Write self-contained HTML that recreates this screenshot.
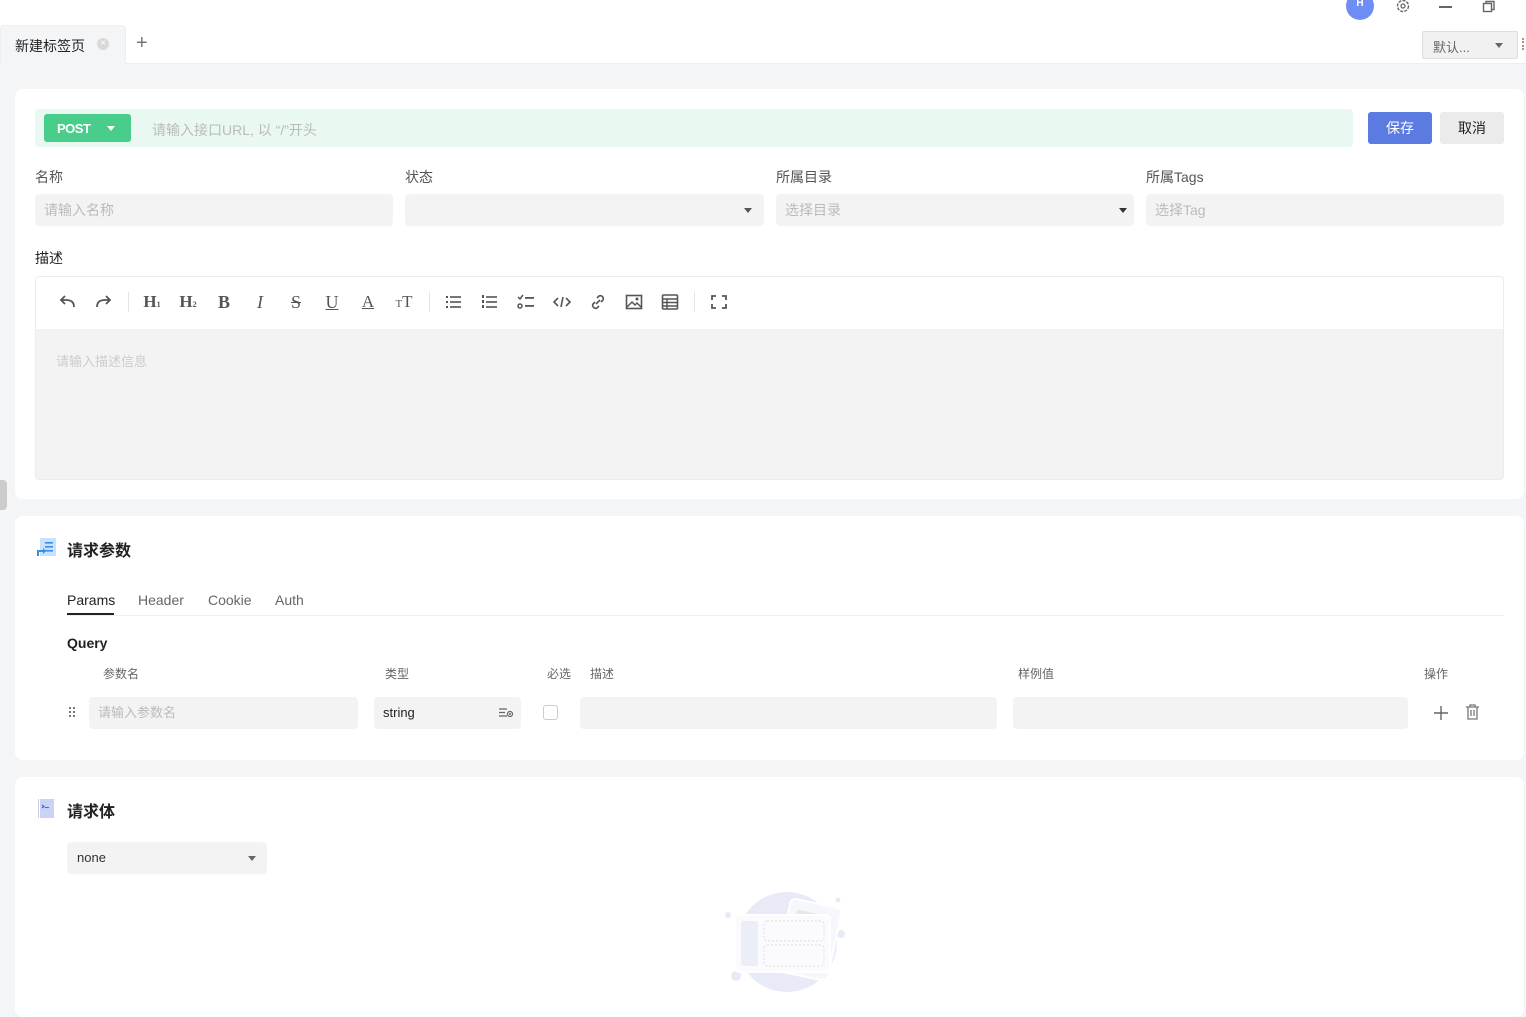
<!DOCTYPE html>
<html><head><meta charset="utf-8">
<style>
*{margin:0;padding:0;box-sizing:border-box}
body{width:1526px;height:1009px;overflow:hidden;background:#f4f5f7;font-family:"Liberation Sans","Noto Sans CJK SC",sans-serif;font-size:14px;color:#333;position:relative}
.a{position:absolute}
.card{position:absolute;left:15px;width:1509px;background:#fff;border-radius:8px}
.inp{position:absolute;background:#f3f3f3;border-radius:4px;height:32px;color:#bbb;font-size:14px;line-height:32px;padding-left:9px}
.lbl{position:absolute;font-size:14px;color:#555}
.tri{position:absolute;width:0;height:0;border-left:4px solid transparent;border-right:4px solid transparent;border-top:5px solid #555}
.tb{position:absolute;top:292px;width:20px;height:20px;color:#555;font-family:"Liberation Serif",serif;font-size:17px;text-align:center;line-height:20px}
.sep{position:absolute;top:292px;width:1px;height:20px;background:#e5e5e5}
.th{position:absolute;top:665px;font-size:12px;color:#666}
</style></head><body>
<!-- top bar -->
<div class="a" style="left:0;top:0;width:1526px;height:64px;background:#fff;border-bottom:1px solid #eceef2"></div>
<div class="a" style="left:0;top:25px;width:126px;height:40px;background:#f4f5f7;border:1px solid #eceef2;border-bottom:none;border-radius:4px 4px 0 0"></div>
<div class="a" style="left:15px;top:36px;font-size:14px;color:#222">新建标签页</div>
<div class="a" style="left:97px;top:38px;width:12px;height:12px;border-radius:50%;background:#d9d9d9;color:#fff;font-size:10px;line-height:12px;text-align:center">×</div>
<div class="a" style="left:136px;top:32px;font-size:20px;color:#777">+</div>
<div class="a" style="left:1346px;top:-8px;width:28px;height:28px;border-radius:50%;background:#6f8ef5;color:#fff;font-size:10px;font-weight:bold;text-align:center;line-height:28px"><span style="position:relative;top:-2px">H</span></div>
<svg class="a" style="left:1395px;top:0" width="16" height="14" viewBox="0 0 16 14"><circle cx="8" cy="6" r="5.5" fill="none" stroke="#666" stroke-width="1.4" stroke-dasharray="3 1.2"/><circle cx="8" cy="6" r="2" fill="none" stroke="#666" stroke-width="1.3"/></svg>
<div class="a" style="left:1439px;top:6px;width:13px;height:1.5px;background:#666"></div>
<svg class="a" style="left:1482px;top:0" width="14" height="14"><rect x="1.5" y="3.5" width="8" height="8" fill="none" stroke="#666" stroke-width="1.4"/><path d="M4 3.5V1.5h8v8h-2.5" fill="none" stroke="#666" stroke-width="1.4"/></svg>
<div class="a" style="left:1422px;top:31px;width:96px;height:28px;background:#f1f1f1;border:1px solid #ddd;border-radius:2px"></div>
<div class="a" style="left:1433px;top:37px;font-size:13px;color:#666">默认...</div>
<div class="tri" style="left:1495px;top:43px;border-top-color:#666"></div>
<div class="a" style="left:1522px;top:38px;width:2px;height:12px;border-left:2px dotted #b88"></div>
<div class="a" style="left:0;top:480px;width:7px;height:30px;background:#ccc;border-radius:0 4px 4px 0"></div>

<!-- card1 -->
<div class="card" style="top:89px;height:410px"></div>
<div class="a" style="left:35px;top:109px;width:1318px;height:38px;background:#e9f8f1;border-radius:4px"></div>
<div class="a" style="left:44px;top:114px;width:87px;height:28px;background:#48cd8b;border-radius:3px;color:#fff;font-weight:bold;font-size:13px;line-height:29px;padding-left:13px;letter-spacing:-0.5px">POST</div>
<div class="tri" style="left:107px;top:126px;border-top-color:#fff"></div>
<div class="a" style="left:152px;top:120px;color:#bbb;font-size:14px">请输入接口URL, 以 “/”开头</div>
<div class="a" style="left:1368px;top:112px;width:64px;height:32px;background:#5b7be0;border-radius:3px;color:#fff;text-align:center;line-height:32px">保存</div>
<div class="a" style="left:1440px;top:112px;width:64px;height:32px;background:#ebebeb;border-radius:3px;color:#222;text-align:center;line-height:32px">取消</div>

<div class="lbl" style="left:35px;top:167px">名称</div>
<div class="lbl" style="left:405px;top:167px">状态</div>
<div class="lbl" style="left:776px;top:167px">所属目录</div>
<div class="lbl" style="left:1146px;top:167px">所属Tags</div>
<div class="inp" style="left:35px;top:194px;width:358px">请输入名称</div>
<div class="inp" style="left:405px;top:194px;width:359px"></div>
<div class="tri" style="left:744px;top:208px"></div>
<div class="inp" style="left:776px;top:194px;width:358px">选择目录</div>
<div class="tri" style="left:1119px;top:208px;border-top-color:#333"></div>
<div class="inp" style="left:1146px;top:194px;width:358px">选择Tag</div>
<div class="lbl" style="left:35px;top:248px;color:#222">描述</div>

<div class="a" style="left:35px;top:276px;width:1469px;height:204px;border:1px solid #ebebf0;border-radius:4px;overflow:hidden">
  <div class="a" style="left:0;top:52px;width:1469px;height:152px;background:#f3f3f3"></div>
</div>
<div class="a" style="left:56px;top:351px;color:#ccc;font-size:13px">请输入描述信息</div>
<!-- toolbar -->
<svg class="a" style="left:58px;top:293px" width="20" height="18"><path d="M16 14c0-5-3-7-8-7H3M7 3L3 7l4 4" fill="none" stroke="#555" stroke-width="1.8"/></svg>
<svg class="a" style="left:94px;top:293px" width="20" height="18"><path d="M3 14c0-5 3-7 8-7h5M12 3l4 4-4 4" fill="none" stroke="#555" stroke-width="1.8"/></svg>
<div class="sep" style="left:128px"></div>
<div class="tb" style="left:142px;font-weight:bold">H<span style="font-size:8px">1</span></div>
<div class="tb" style="left:178px;font-weight:bold">H<span style="font-size:8px">2</span></div>
<div class="tb" style="left:214px;font-family:'Liberation Serif';font-weight:bold;font-size:18px">B</div>
<div class="tb" style="left:250px;font-style:italic;font-size:18px">I</div>
<div class="tb" style="left:286px;text-decoration:line-through;font-size:18px">S</div>
<div class="tb" style="left:322px;text-decoration:underline;font-size:18px">U</div>
<div class="tb" style="left:358px;font-size:17px;text-decoration:underline">A</div>
<div class="tb" style="left:394px;font-size:17px"><span style="font-size:11px">T</span>T</div>
<div class="sep" style="left:429px"></div>
<svg class="a" style="left:444px;top:293px" width="20" height="18"><g fill="#555"><rect x="2" y="3" width="2" height="2"/><rect x="2" y="8" width="2" height="2"/><rect x="2" y="13" width="2" height="2"/><rect x="6" y="3.2" width="11" height="1.6"/><rect x="6" y="8.2" width="11" height="1.6"/><rect x="6" y="13.2" width="11" height="1.6"/></g></svg>
<svg class="a" style="left:480px;top:293px" width="20" height="18"><g fill="#555"><rect x="2" y="2" width="2" height="3"/><rect x="2" y="7" width="2" height="3"/><rect x="2" y="12" width="2" height="3"/><rect x="6" y="3.2" width="11" height="1.6"/><rect x="6" y="8.2" width="11" height="1.6"/><rect x="6" y="13.2" width="11" height="1.6"/></g></svg>
<svg class="a" style="left:516px;top:293px" width="20" height="18"><path d="M2 4l2 2 3-4" fill="none" stroke="#555" stroke-width="1.5"/><circle cx="4" cy="13" r="2" fill="none" stroke="#555" stroke-width="1.5"/><rect x="9" y="4" width="9" height="1.8" fill="#555"/><rect x="9" y="12" width="9" height="1.8" fill="#555"/></svg>
<svg class="a" style="left:552px;top:293px" width="20" height="18"><path d="M6 5L2 9l4 4M14 5l4 4-4 4M11 4l-2 10" fill="none" stroke="#555" stroke-width="1.6"/></svg>
<svg class="a" style="left:588px;top:293px" width="20" height="18"><path d="M8 11l4-4M9 5l2-2a3 3 0 014 4l-2 2M11 13l-2 2a3 3 0 01-4-4l2-2" fill="none" stroke="#555" stroke-width="1.6"/></svg>
<svg class="a" style="left:624px;top:293px" width="20" height="18"><rect x="2.5" y="2.5" width="15" height="13" fill="none" stroke="#555" stroke-width="1.6"/><path d="M3 14l5-5 3 3 2-2 4 4" fill="none" stroke="#555" stroke-width="1.5"/><circle cx="13" cy="6" r="1.5" fill="#555"/></svg>
<svg class="a" style="left:660px;top:293px" width="20" height="18"><rect x="2.5" y="2" width="15" height="14" rx="1" fill="none" stroke="#555" stroke-width="1.6"/><path d="M2.5 6h15M2.5 9.5h15M2.5 13h15M7 6v10" stroke="#555" stroke-width="1.4"/></svg>
<div class="sep" style="left:694px"></div>
<svg class="a" style="left:709px;top:293px" width="20" height="18"><path d="M3 7V3h4M13 3h4v4M17 11v4h-4M7 15H3v-4" fill="none" stroke="#555" stroke-width="1.8"/></svg>

<!-- card2 -->
<div class="card" style="top:516px;height:244px"></div>
<svg class="a" style="left:36px;top:538px" width="20" height="20"><rect x="4" y="0" width="16" height="18" fill="#c9e2fb"/><g fill="#3c8de8"><rect x="9" y="4" width="8" height="1.6"/><rect x="9" y="8" width="8" height="1.6"/><rect x="9" y="12" width="8" height="1.6"/><path d="M1 18v-6h6v-2l3 3-3 3v-2H3v4z"/></g></svg>
<div class="a" style="left:67px;top:537px;font-size:16px;font-weight:bold;color:#222">请求参数</div>
<div class="a" style="left:67px;top:592px;color:#222">Params</div>
<div class="a" style="left:138px;top:592px;color:#666">Header</div>
<div class="a" style="left:208px;top:592px;color:#666">Cookie</div>
<div class="a" style="left:275px;top:592px;color:#666">Auth</div>
<div class="a" style="left:67px;top:615px;width:1437px;height:1px;background:#eee"></div>
<div class="a" style="left:67px;top:613px;width:47px;height:2px;background:#222"></div>
<div class="a" style="left:67px;top:635px;font-size:14px;font-weight:bold;color:#222">Query</div>
<div class="th" style="left:103px">参数名</div>
<div class="th" style="left:385px">类型</div>
<div class="th" style="left:547px">必选</div>
<div class="th" style="left:590px">描述</div>
<div class="th" style="left:1018px">样例值</div>
<div class="th" style="left:1424px">操作</div>
<svg class="a" style="left:69px;top:707px" width="8" height="12"><g fill="#777"><rect x="0" y="0" width="2" height="2"/><rect x="4" y="0" width="2" height="2"/><rect x="0" y="4" width="2" height="2"/><rect x="4" y="4" width="2" height="2"/><rect x="0" y="8" width="2" height="2"/><rect x="4" y="8" width="2" height="2"/></g></svg>
<div class="inp" style="left:89px;top:697px;width:269px;font-size:13px">请输入参数名</div>
<div class="inp" style="left:374px;top:697px;width:147px;color:#222;font-size:13px">string</div>
<svg class="a" style="left:499px;top:707px" width="14" height="12"><path d="M0 2h8M0 5.5h6M0 9h8" stroke="#666" stroke-width="1.2"/><circle cx="11" cy="7" r="2.5" fill="none" stroke="#666" stroke-width="1.2"/><circle cx="11" cy="7" r="1" fill="#666"/></svg>
<div class="a" style="left:543px;top:705px;width:15px;height:15px;border:1px solid #ccc;border-radius:3px;background:#fff"></div>
<div class="inp" style="left:580px;top:697px;width:417px"></div>
<div class="inp" style="left:1013px;top:697px;width:395px"></div>
<svg class="a" style="left:1434px;top:706px" width="14" height="14"><path d="M7 0v14M0 7h14" stroke="#666" stroke-width="1.4"/></svg>
<svg class="a" style="left:1465px;top:704px" width="15" height="16"><path d="M1 3h13M5 3V1h5v2M3 3v12h9V3M6 6v6M9 6v6" fill="none" stroke="#777" stroke-width="1.3"/></svg>

<!-- card3 -->
<div class="card" style="top:777px;height:240px"></div>
<svg class="a" style="left:38px;top:799px" width="18" height="20"><rect x="0" y="0" width="1" height="19" fill="#ccd"/><rect x="2" y="0" width="14" height="19" fill="#c8d3f5"/><path d="M4 6l2 1.5L4 9" fill="none" stroke="#4a64d8" stroke-width="1.2"/><rect x="7" y="8" width="4" height="1" fill="#4a64d8"/></svg>
<div class="a" style="left:67px;top:798px;font-size:16px;font-weight:bold;color:#222">请求体</div>
<div class="a" style="left:67px;top:842px;width:200px;height:32px;background:#f3f3f3;border-radius:4px"></div>
<div class="a" style="left:77px;top:850px;color:#333;font-size:13px">none</div>
<div class="tri" style="left:248px;top:856px;border-top-color:#666"></div>
<!-- empty illustration -->
<svg class="a" style="left:720px;top:885px" width="130" height="110">
<circle cx="67" cy="57" r="50" fill="#e8ebf7"/>
<circle cx="8" cy="30" r="3" fill="#e8ebf7"/><circle cx="118" cy="15" r="2.5" fill="#e8ebf7"/><circle cx="121" cy="49" r="4" fill="#e8ebf7"/><circle cx="16" cy="91" r="5" fill="#e8ebf7"/>
<g transform="rotate(12 90 60)"><rect x="62" y="18" width="52" height="74" rx="5" fill="#f6f7fb" stroke="#fff" stroke-width="2"/><rect x="70" y="28" width="30" height="6" fill="#e6e7ee"/></g>
<rect x="15" y="30" width="95" height="57" rx="5" fill="#fbfbfd" stroke="#fff" stroke-width="2"/>
<rect x="21" y="36" width="17" height="45" rx="3" fill="#eceef7"/>
<rect x="44" y="36" width="60" height="20" rx="3" fill="none" stroke="#ddd" stroke-dasharray="2 2"/>
<rect x="44" y="60" width="60" height="21" rx="3" fill="none" stroke="#ddd" stroke-dasharray="2 2"/>
</svg>
</body></html>
